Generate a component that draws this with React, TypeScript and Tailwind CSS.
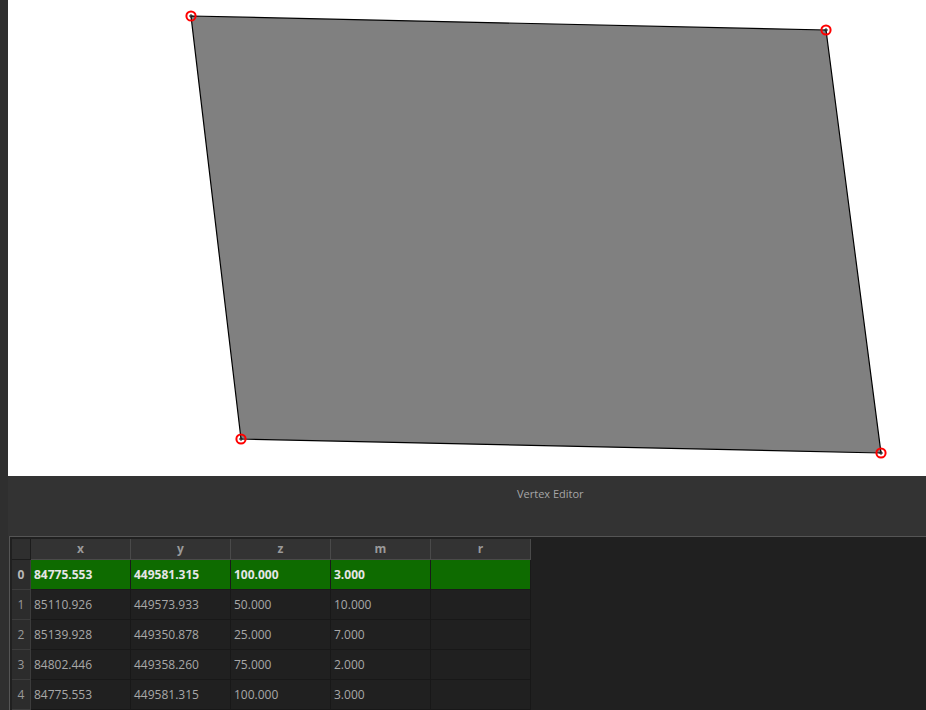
const columns = ["x", "y", "z", "m", "r"];

const rows: string[][] = [
  ["84775.553", "449581.315", "100.000", "3.000", ""],
  ["85110.926", "449573.933", "50.000", "10.000", ""],
  ["85139.928", "449350.878", "25.000", "7.000", ""],
  ["84802.446", "449358.260", "75.000", "2.000", ""],
  ["84775.553", "449581.315", "100.000", "3.000", ""],
];

// vertex positions inside the canvas (canvas starts at x=8)
const vertices: [number, number][] = [
  [183, 16],
  [818, 30],
  [873, 453],
  [233, 439],
];

function MapCanvas() {
  const points = vertices.map(([x, y]) => `${x},${y}`).join(" ");
  return (
    <div className="h-[476px] bg-white ml-2">
      <svg width="918" height="476" viewBox="0 0 918 476">
        <polygon points={points} fill="#808080" stroke="#000" strokeWidth="1.2" />
        {vertices.map(([x, y], i) => (
          <g key={i}>
            <path d={`M${x - 2} ${y}H${x + 2}M${x} ${y - 2}V${y + 2}`} stroke="#222" strokeWidth="1" />
            <circle cx={x} cy={y} r="4.6" fill="none" stroke="#ff0000" strokeWidth="2" />
          </g>
        ))}
      </svg>
    </div>
  );
}

function VertexTable() {
  return (
    <div className="grid grid-cols-[19px_repeat(5,100px)] w-max">
      <div className="h-[21px] bg-[#2f2f2f] border-r border-b border-[#1c1c1c]" />
      {columns.map((c) => (
        <div
          key={c}
          className="h-[21px] bg-[#333333] border-r border-b border-[#4a4a4a] flex items-center justify-center text-[12px] font-bold text-[#9a9a9a]"
        >
          {c}
        </div>
      ))}
      {rows.map((row, i) => {
        const selected = i === 0;
        return [
          <div
            key={`h${i}`}
            className={`h-[30px] bg-[#2c2c2c] border-b border-r border-[#3c3c3c] flex items-center justify-center text-[12px] ${
              selected ? "font-bold text-[#b8b8b8]" : "text-[#9a9a9a]"
            }`}
          >
            {i}
          </div>,
          ...row.map((v, j) => (
            <div
              key={`c${i}-${j}`}
              className={`h-[30px] border-r border-b flex items-center pl-[3px] text-[12px] ${
                selected
                  ? "bg-[#0e6b00] border-[#1a1a1a] font-bold text-[#e6e6e6]"
                  : "bg-[#202020] border-[#181818] text-[#a8a8a8]"
              }`}
            >
              {v}
            </div>
          )),
        ];
      })}
    </div>
  );
}

export default function App() {
  return (
    <div
      className="w-[926px] h-[710px] bg-[#2f2f2f] flex flex-col overflow-hidden"
      style={{ fontFamily: '"Open Sans", "Noto Sans", sans-serif' }}
    >
      <MapCanvas />
      <div className="h-[60px] bg-[#333333] ml-2 pl-[509px] pt-[10px] text-[11px] text-[#a6a6a6]">
        Vertex Editor
      </div>
      <div className="flex-1 ml-[9px] border-l border-t border-[#555555] bg-[#202020] pl-[2px] pt-[2px]">
        <VertexTable />
      </div>
    </div>
  );
}
